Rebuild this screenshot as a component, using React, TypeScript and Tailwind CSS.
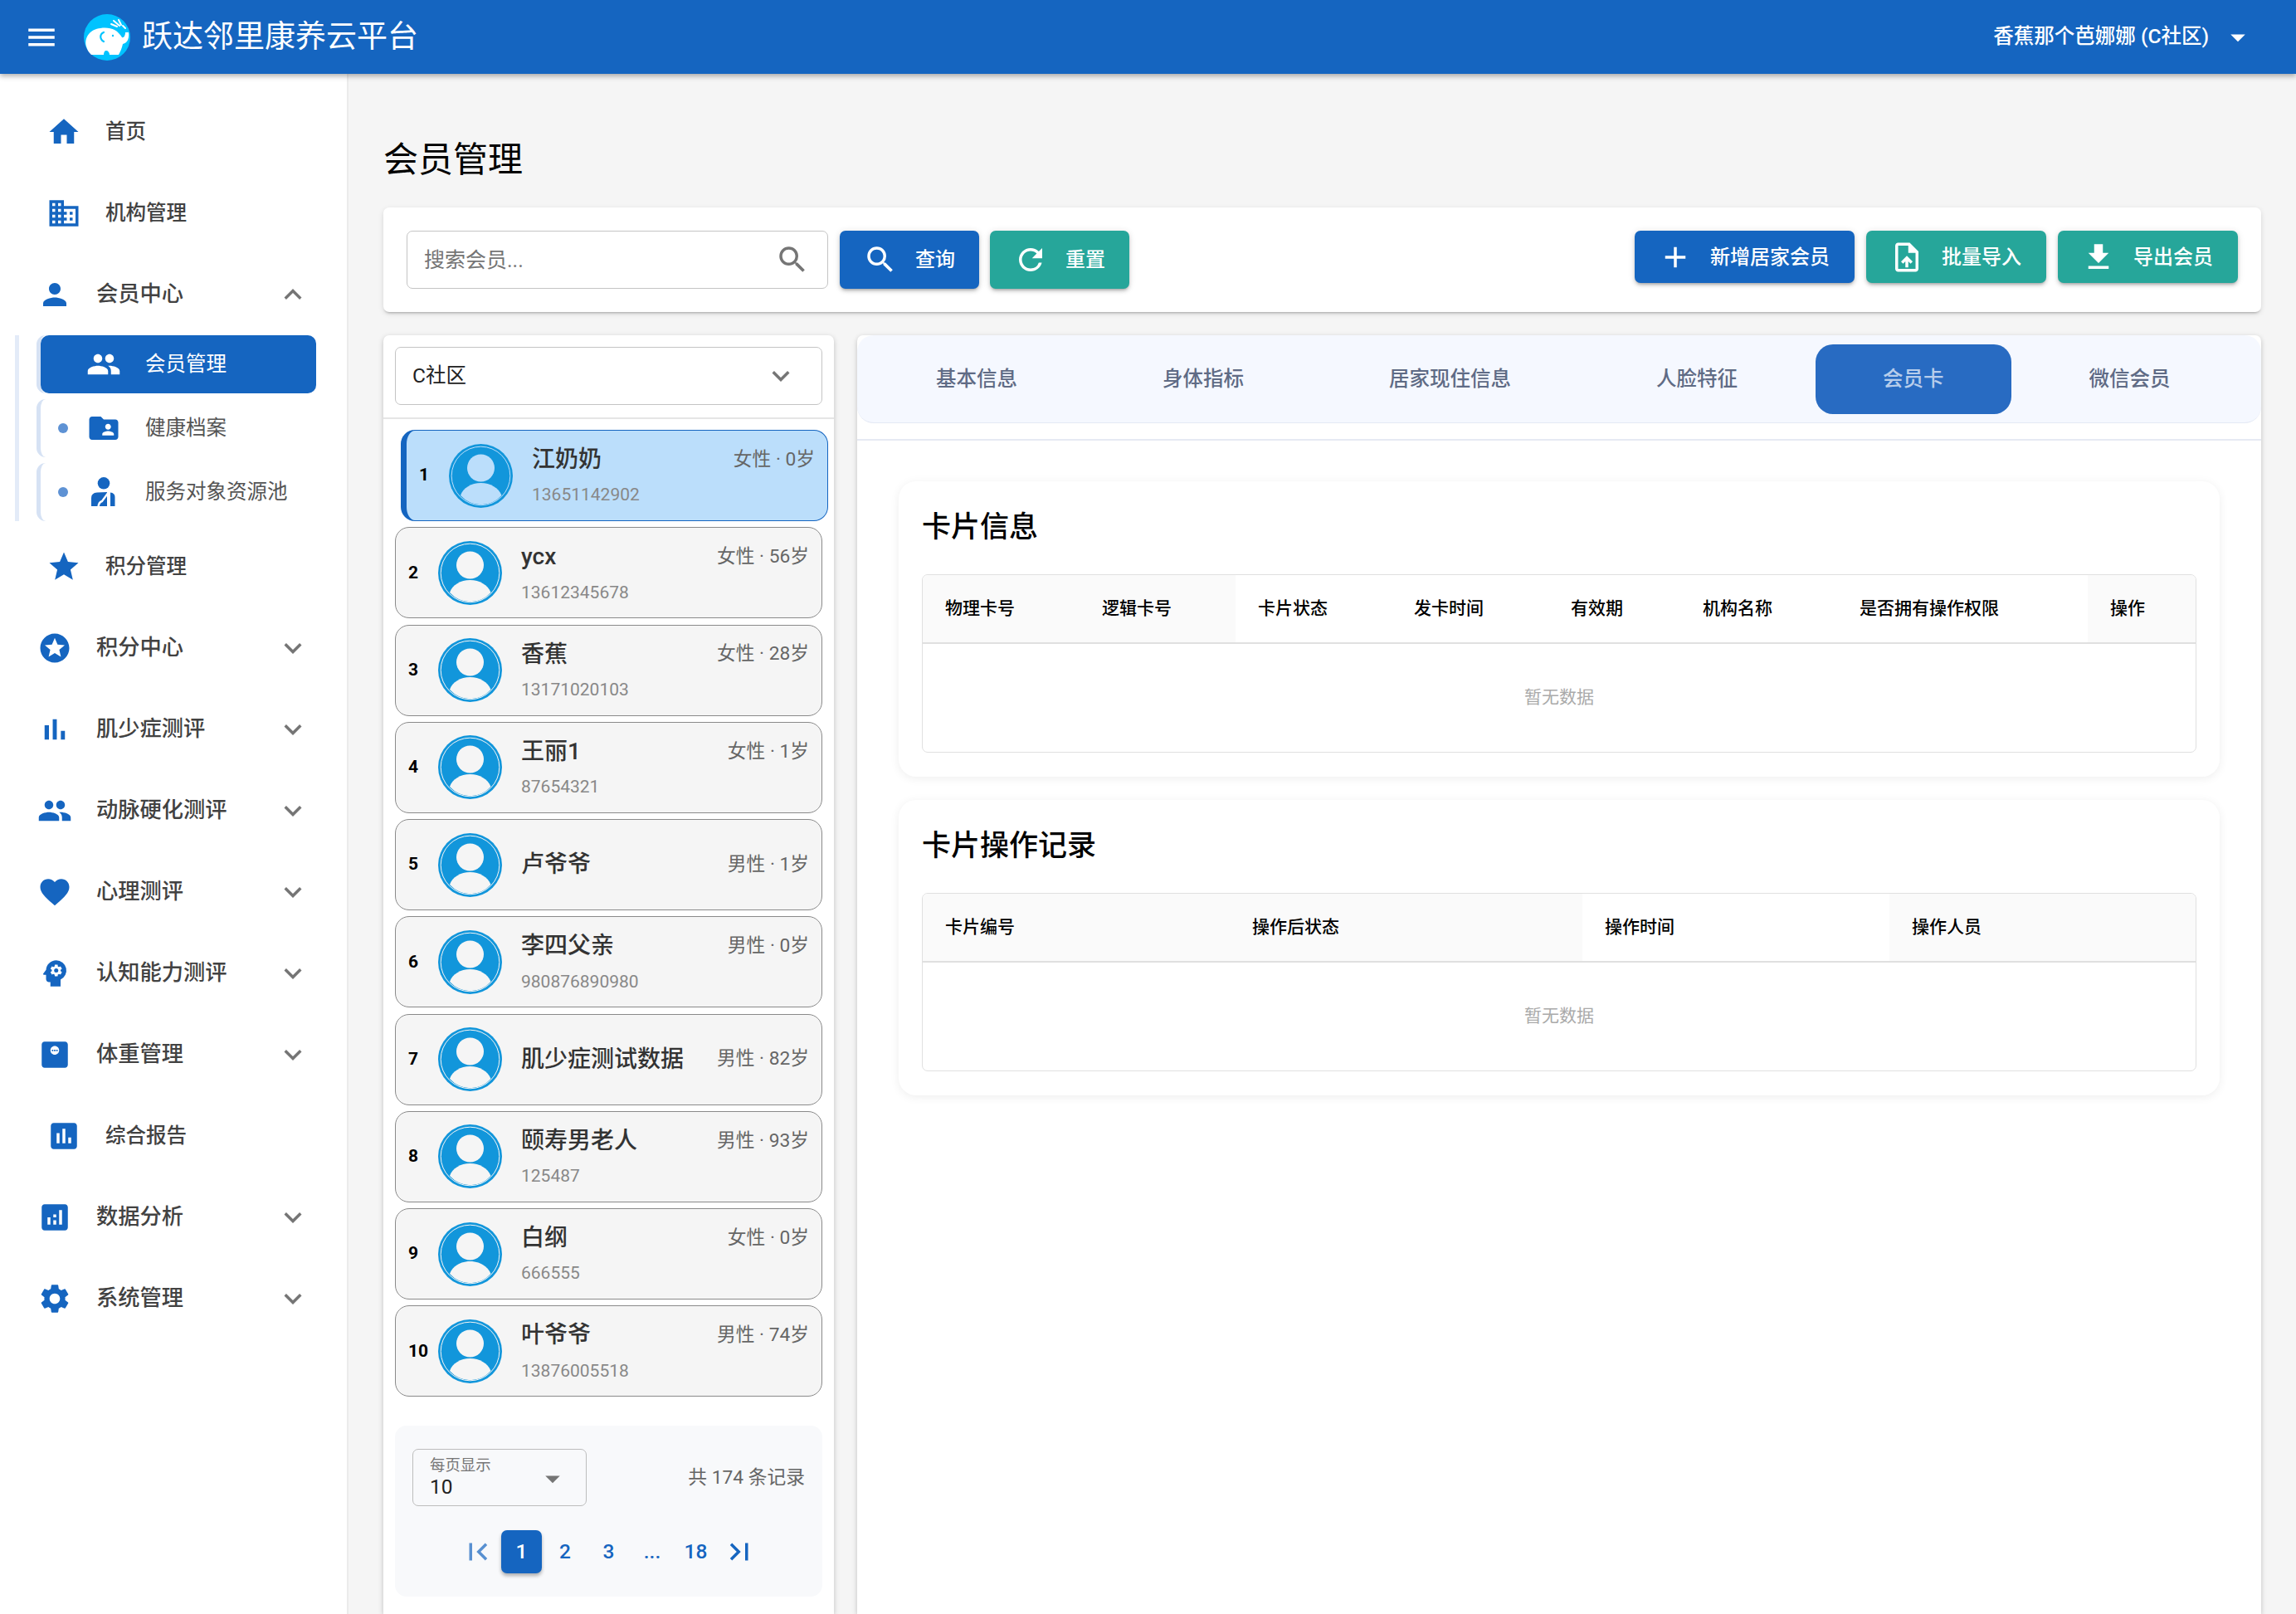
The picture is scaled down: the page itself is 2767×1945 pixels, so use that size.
import type { ReactNode } from "react";
import {
  MdAdd,
  MdAnalytics,
  MdArrowDropDown,
  MdAssessment,
  MdDomain,
  MdExpandLess,
  MdExpandMore,
  MdFavorite,
  MdFileDownload,
  MdFirstPage,
  MdFolderShared,
  MdHome,
  MdKeyboardArrowDown,
  MdLastPage,
  MdMenu,
  MdMonitorWeight,
  MdPeople,
  MdPerson,
  MdPsychology,
  MdRefresh,
  MdSearch,
  MdSettings,
  MdStar,
  MdStars,
  MdUploadFile,
} from "react-icons/md";

const members = [
  { name: "江奶奶", info: "女性 · 0岁", phone: "13651142902" },
  { name: "ycx", info: "女性 · 56岁", phone: "13612345678" },
  { name: "香蕉", info: "女性 · 28岁", phone: "13171020103" },
  { name: "王丽1", info: "女性 · 1岁", phone: "87654321" },
  { name: "卢爷爷", info: "男性 · 1岁", phone: "" },
  { name: "李四父亲", info: "男性 · 0岁", phone: "980876890980" },
  { name: "肌少症测试数据", info: "男性 · 82岁", phone: "" },
  { name: "颐寿男老人", info: "男性 · 93岁", phone: "125487" },
  { name: "白纲", info: "女性 · 0岁", phone: "666555" },
  { name: "叶爷爷", info: "男性 · 74岁", phone: "13876005518" },
];

const tabs = ["基本信息", "身体指标", "居家现住信息", "人脸特征", "会员卡", "微信会员"];

function Logo() {
  return (
    <svg viewBox="0 0 56 56" className="w-[56px] h-[56px] shrink-0">
      <circle cx="28" cy="28" r="28" fill="#00c3ff" />
      <path
        d="M3 39C0 28 8 18 20 17C27 16 33 17 37 19C41 21 44 25 46 28C48 29 50 26 50 22L54 22C55 28 53 35 47 36C46 41 44 45 42 49L31 49C31 46 29 44 27 44C25 44 24 46 24 49L9 49C6 46 4 43 3 39Z"
        fill="#fff"
      />
      <path d="M24 22C19 24 19 30 24 33" fill="none" stroke="#00c3ff" strokeWidth="2.2" strokeLinecap="round" />
      <circle cx="35" cy="26" r="1.2" fill="#00c3ff" />
      <path
        d="M33 12L40 15M36 8L43 14M42 7L45 13M47 14L50 17"
        fill="none"
        stroke="#fff"
        strokeWidth="2"
        strokeLinecap="round"
      />
    </svg>
  );
}

function BarsIcon() {
  return (
    <svg viewBox="0 0 24 24" className="w-[42px] h-[42px]" fill="currentColor">
      <path d="M5 9.2h3V19H5V9.2zM10.6 5h2.8v14h-2.8V5zm5.6 8H19v6h-2.8v-6z" />
    </svg>
  );
}

function ServiceIcon() {
  return (
    <svg viewBox="0 0 32 38" className="w-[32px] h-[38px] text-[#1565c0]">
      <circle cx="16" cy="8.3" r="7.3" fill="currentColor" />
      <path d="M1 36V26Q1 20 8 19.5L20 19V36Z" fill="currentColor" />
      <path d="M24 19.5Q29.5 20 29.5 25V36H24Z" fill="currentColor" />
      <path d="M22 19L14 30Q10 31 9.5 37" fill="none" stroke="#fff" strokeWidth="2.4" />
    </svg>
  );
}

function Avatar({ selected }: { selected: boolean }) {
  const fill = selected ? "#bbdefb" : "#f5f5f5";
  return (
    <svg viewBox="0 0 77 77" className="w-[77px] h-[77px] shrink-0">
      <circle cx="38.5" cy="38.5" r="38.5" fill="#1296db" />
      <circle cx="38.5" cy="38.5" r="35.3" fill="none" stroke={fill} strokeWidth="1" />
      <circle cx="38.5" cy="29" r="16.5" fill={fill} />
      <path d="M14 62C17 53 27 47 38.5 47C50 47 60 53 63.5 62A33 33 0 0 1 14 62Z" fill={fill} />
    </svg>
  );
}

function TopItem({ icon, label }: { icon: ReactNode; label: string }) {
  return (
    <div className="h-[98px] flex items-center pl-[56px] gap-[29px] text-[24.5px] font-medium text-[#424242]">
      <span className="text-[42px] text-[#1565c0] flex">{icon}</span>
      {label}
    </div>
  );
}

function GroupItem({ icon, label, open }: { icon: ReactNode; label: string; open?: boolean }) {
  return (
    <div className="h-[98px] flex items-center pl-[45px] pr-[44px] text-[26.25px] font-medium text-[#424242]">
      <span className="text-[42px] text-[#1565c0] flex mr-[29px]">{icon}</span>
      <span className="flex-1">{label}</span>
      <span className="text-[42px] text-[#757575] flex">{open ? <MdExpandLess /> : <MdExpandMore />}</span>
    </div>
  );
}

function SubItem({ icon, label }: { icon: ReactNode; label: string }) {
  return (
    <div className="h-[70px] w-[337px] rounded-[11px] border-l-[5px] border-[#d6e2f4] flex items-center text-[24.5px] text-[#555]">
      <span className="w-[12px] h-[12px] rounded-full bg-[#5e92d4] ml-[21px] mr-[22px] shrink-0" />
      <span className="w-[42px] h-[42px] flex items-center justify-center text-[42px] text-[#1565c0] mr-[29px]">
        {icon}
      </span>
      {label}
    </div>
  );
}

function Sidebar() {
  return (
    <aside className="w-[420px] shrink-0 bg-white border-r-2 border-[#ebebeb] pt-[21px]">
      <TopItem icon={<MdHome />} label="首页" />
      <TopItem icon={<MdDomain />} label="机构管理" />
      <GroupItem icon={<MdPerson />} label="会员中心" open />
      <div className="ml-[18px] border-l-[5px] border-[#e3ebf8] pl-[21px] flex flex-col gap-[7px]">
        <div className="h-[70px] w-[337px] rounded-[11px] border-l-[5px] border-[#d6e2f4]">
          <div className="h-full rounded-[10px] bg-[#1565c0] text-white text-[24.5px] flex items-center pl-[55px] gap-[29px]">
            <MdPeople className="text-[42px]" />
            会员管理
          </div>
        </div>
        <SubItem icon={<MdFolderShared />} label="健康档案" />
        <SubItem icon={<ServiceIcon />} label="服务对象资源池" />
      </div>
      <div className="h-[6px]" />
      <TopItem icon={<MdStar />} label="积分管理" />
      <GroupItem icon={<MdStars />} label="积分中心" />
      <GroupItem icon={<BarsIcon />} label="肌少症测评" />
      <GroupItem icon={<MdPeople />} label="动脉硬化测评" />
      <GroupItem icon={<MdFavorite />} label="心理测评" />
      <GroupItem icon={<MdPsychology />} label="认知能力测评" />
      <GroupItem icon={<MdMonitorWeight />} label="体重管理" />
      <TopItem icon={<MdAssessment />} label="综合报告" />
      <GroupItem icon={<MdAnalytics />} label="数据分析" />
      <GroupItem icon={<MdSettings />} label="系统管理" />
    </aside>
  );
}

function ActionButton({
  icon,
  label,
  teal,
  tall,
}: {
  icon: ReactNode;
  label: string;
  teal?: boolean;
  tall?: boolean;
}) {
  return (
    <button
      className={`${tall ? "h-[70px] pr-[29px]" : "h-[63px] pr-[30px]"} ${
        teal ? "bg-[#26a69a]" : "bg-[#1565c0]"
      } rounded-[7px] text-white text-[24px] font-medium flex items-center pl-[28px] gap-[21px] shadow-[0_3px_3px_-2px_rgba(0,0,0,0.2),0_3px_4px_0_rgba(0,0,0,0.14),0_1px_8px_0_rgba(0,0,0,0.12)]`}
    >
      <span className="text-[42px] flex">{icon}</span>
      {label}
    </button>
  );
}

function Toolbar() {
  return (
    <div className="h-[126px] shrink-0 bg-white rounded-[7px] px-[28px] pt-[28px] flex justify-between shadow-[0_3px_3px_-2px_rgba(0,0,0,0.25),0_2px_6px_0_rgba(0,0,0,0.12)]">
      <div className="flex gap-[13px]">
        <div className="w-[508px] h-[70px] mr-[1px] border border-[#c4c4c4] rounded-[7px] flex items-center pl-[20px] pr-[21px]">
          <input
            placeholder="搜索会员..."
            className="flex-1 min-w-0 outline-none pt-[2px] text-[25px] placeholder:text-[#757575]"
          />
          <MdSearch className="text-[42px] text-[#757575]" />
        </div>
        <ActionButton tall icon={<MdSearch />} label="查询" />
        <ActionButton tall teal icon={<MdRefresh />} label="重置" />
      </div>
      <div className="flex gap-[14px]">
        <ActionButton icon={<MdAdd />} label="新增居家会员" />
        <ActionButton teal icon={<MdUploadFile />} label="批量导入" />
        <ActionButton teal icon={<MdFileDownload />} label="导出会员" />
      </div>
    </div>
  );
}

function MemberRow({ index, name, info, phone }: { index: number; name: string; info: string; phone: string }) {
  const selected = index === 1;
  return (
    <div
      className={`h-[110px] shrink-0 rounded-[17px] flex items-center pl-[15px] pr-[15px] ${
        selected
          ? "translate-x-[7px] border border-l-[7px] border-[#1565c0] bg-[#bbdefb]"
          : "border border-[#8a8a8a] bg-[#f5f5f5]"
      }`}
    >
      <span className="w-[36px] shrink-0 text-[21px] font-bold text-black">{index}</span>
      <Avatar selected={selected} />
      <div className="flex-1 min-w-0 ml-[23px] flex flex-col justify-center">
        <div className="h-[40px] flex items-center justify-between">
          <span className="text-[28px] font-medium text-[#333]">{name}</span>
          <span className="text-[22.75px] text-[#666]">{info}</span>
        </div>
        {phone && <div className="h-[30px] mt-[8px] flex items-center text-[21px] text-[#888]">{phone}</div>}
      </div>
    </div>
  );
}

function PageButton({ children, active }: { children: ReactNode; active?: boolean }) {
  return (
    <span
      className={`w-[49px] h-[52px] rounded-[7px] flex items-center justify-center text-[24.5px] font-medium ${
        active
          ? "bg-[#1565c0] text-white shadow-[0_3px_4px_rgba(0,0,0,0.3)]"
          : "text-[#1565c0]"
      }`}
    >
      {children}
    </span>
  );
}

function MemberPanel() {
  return (
    <section className="w-[543px] shrink-0 bg-white rounded-t-[7px] overflow-hidden shadow-[0_2px_6px_rgba(0,0,0,0.22)]">
      <div className="px-[14px] pt-[14px] pb-[15px] border-b-2 border-[#e5e5e5]">
        <div className="h-[70px] border border-[#c4c4c4] rounded-[7px] flex items-center justify-between pl-[20px] pr-[28px] text-[24.5px] text-[#222]">
          C社区
          <MdKeyboardArrowDown className="text-[42px] text-[#757575]" />
        </div>
      </div>
      <div className="px-[14px] pt-[13px] flex flex-col gap-[7.25px]">
        {members.map((m, i) => (
          <MemberRow key={m.name} index={i + 1} name={m.name} info={m.info} phone={m.phone} />
        ))}
      </div>
      <div className="mx-[14px] mt-[35px] h-[206px] bg-[#f8f9fb] rounded-[14px] px-[21px] pt-[28px]">
        <div className="flex items-center justify-between">
          <div className="relative w-[210px] h-[69px] border border-[#bdbdbd] rounded-[7px] pl-[20px] pt-[7px]">
            <div className="text-[18.4px] leading-[24px] text-[#757575]">每页显示</div>
            <div className="text-[24.5px] leading-[28px] text-[#222]">10</div>
            <MdArrowDropDown className="absolute right-[19px] top-[14px] text-[42px] text-[#757575]" />
          </div>
          <span className="text-[22.75px] text-[#666]">共 174 条记录</span>
        </div>
        <div className="mt-[29px] flex justify-center gap-[3.5px]">
          <PageButton>
            <MdFirstPage className="text-[42px] opacity-70" />
          </PageButton>
          <PageButton active>1</PageButton>
          <PageButton>2</PageButton>
          <PageButton>3</PageButton>
          <PageButton>...</PageButton>
          <PageButton>18</PageButton>
          <PageButton>
            <MdLastPage className="text-[42px]" />
          </PageButton>
        </div>
      </div>
    </section>
  );
}

function HeaderCell({ label, gray }: { label: string; gray?: boolean }) {
  return (
    <div className={`flex items-center pl-[27px] text-[21px] font-medium text-black ${gray ? "bg-[#fafafa]" : ""}`}>
      {label}
    </div>
  );
}

function CardSection({ title, grid, children }: { title: string; grid: string; children: ReactNode }) {
  return (
    <div className="bg-white rounded-[21px] px-[28px] pt-[30px] pb-[29px] shadow-[0_2px_12px_rgba(0,0,0,0.07)]">
      <h3 className="h-[52px] flex items-center text-[35px] font-medium text-black">{title}</h3>
      <div className="mt-[30px] border border-[#e0e0e0] rounded-[7px] overflow-hidden">
        <div className={`${grid} h-[83px] border-b-2 border-[#e0e0e0]`}>{children}</div>
        <div className="h-[130px] flex items-center justify-center text-[21px] text-[#aaa]">暂无数据</div>
      </div>
    </div>
  );
}

function DetailPanel() {
  return (
    <section className="flex-1 min-w-0 bg-white rounded-t-[7px] overflow-hidden shadow-[0_2px_6px_rgba(0,0,0,0.22)]">
      <div className="h-[106px] bg-[#f5f8ff] border-b border-[#e4e9f4] rounded-[20px] pl-[14px] flex items-center gap-[13px]">
        {tabs.map((t) => (
          <span
            key={t}
            className={`h-[84px] px-[81px] pt-[2px] rounded-[21px] flex items-center text-[24.5px] font-medium ${
              t === "会员卡" ? "bg-[#286bc2] text-[#b7cdeb]" : "text-[#5f6b85]"
            }`}
          >
            {t}
          </span>
        ))}
      </div>
      <div className="mt-[19px] h-[2px] bg-[#e6eaf3]" />
      <div className="px-[50px] pt-[49px] flex flex-col gap-[28px]">
        <CardSection title="卡片信息" grid="grid grid-cols-[189px_188px_188px_189px_159px_189px_302px_1fr]">
          <HeaderCell label="物理卡号" gray />
          <HeaderCell label="逻辑卡号" gray />
          <HeaderCell label="卡片状态" />
          <HeaderCell label="发卡时间" />
          <HeaderCell label="有效期" />
          <HeaderCell label="机构名称" />
          <HeaderCell label="是否拥有操作权限" />
          <HeaderCell label="操作" gray />
        </CardSection>
        <CardSection title="卡片操作记录" grid="grid grid-cols-[370px_425px_370px_1fr]">
          <HeaderCell label="卡片编号" gray />
          <HeaderCell label="操作后状态" gray />
          <HeaderCell label="操作时间" />
          <HeaderCell label="操作人员" gray />
        </CardSection>
      </div>
    </section>
  );
}

export default function App() {
  return (
    <div className="h-[1945px] overflow-hidden flex flex-col bg-[#f5f5f5] font-[Roboto,'Noto_Sans_CJK_SC',sans-serif]">
      <header className="relative z-10 h-[89px] shrink-0 bg-[#1565c0] text-white flex items-center pl-[29px] pr-[49px] shadow-[0_3px_6px_rgba(0,0,0,0.3)]">
        <MdMenu className="text-[42px]" />
        <span className="ml-[30px] mr-[14px] flex">
          <Logo />
        </span>
        <span className="text-[37px] flex-1">跃达邻里康养云平台</span>
        <span className="text-[24.5px] font-medium">香蕉那个芭娜娜 (C社区)</span>
        <MdArrowDropDown className="ml-[14px] text-[42px]" />
      </header>
      <div className="flex-1 min-h-0 flex">
        <Sidebar />
        <main className="flex-1 min-w-0 flex flex-col px-[42px] pt-[75px]">
          <h1 className="h-[56px] shrink-0 mb-[30px] flex items-center text-[42px] text-black">会员管理</h1>
          <Toolbar />
          <div className="flex-1 min-h-0 mt-[28px] flex gap-[28px]">
            <MemberPanel />
            <DetailPanel />
          </div>
        </main>
      </div>
    </div>
  );
}
